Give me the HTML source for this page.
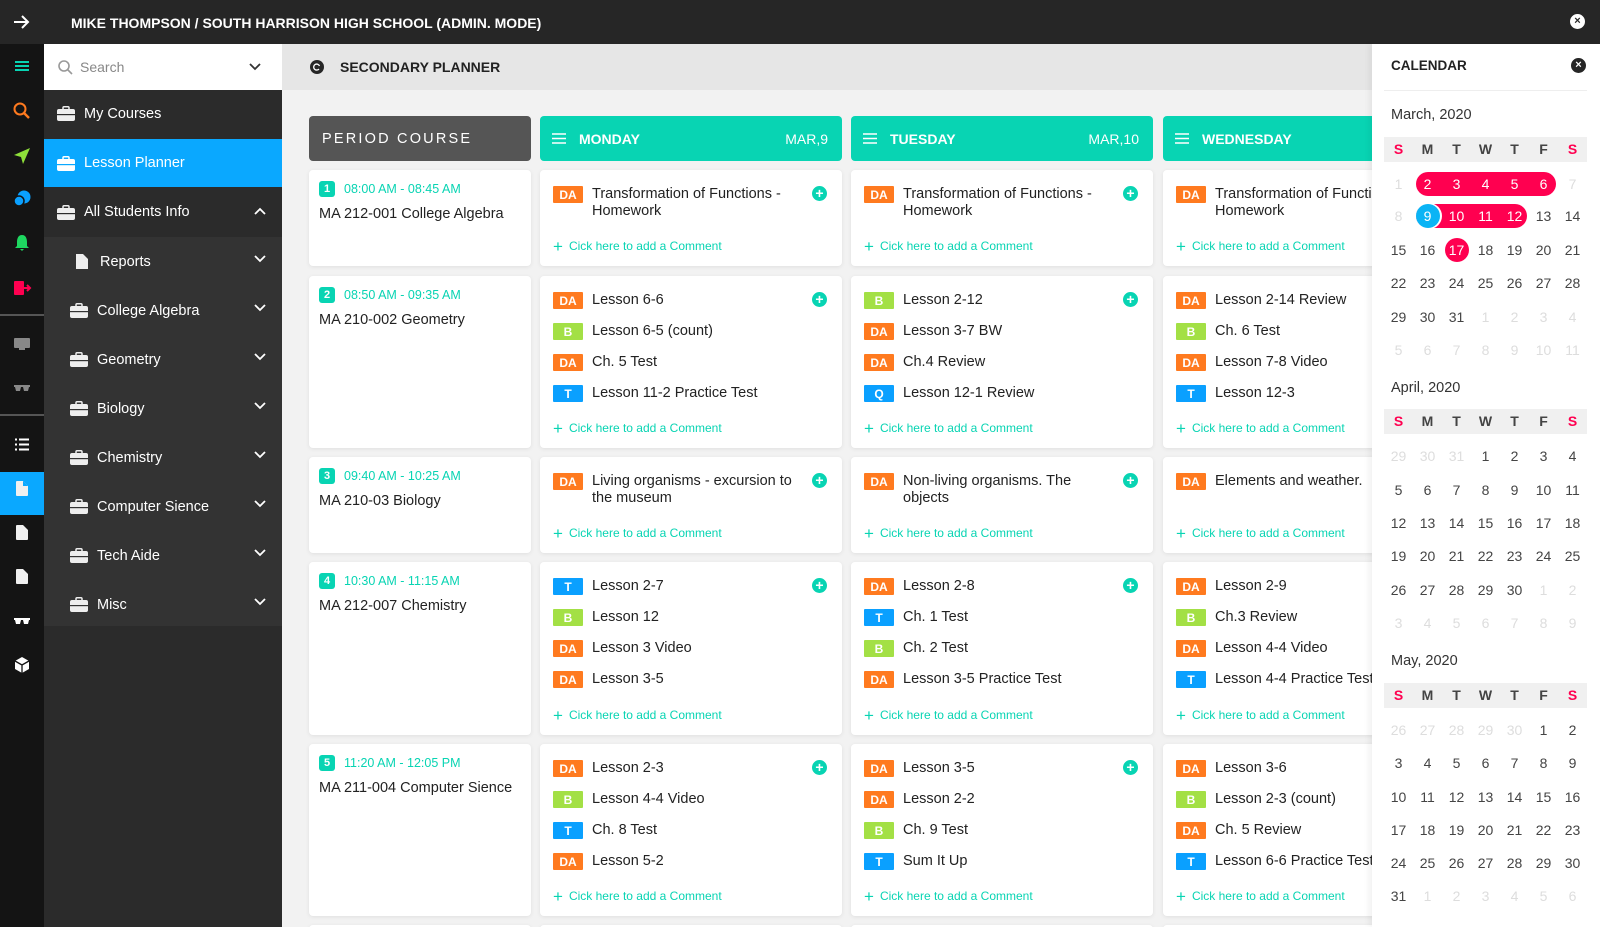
<!DOCTYPE html>
<html><head><meta charset="utf-8"><style>
*{box-sizing:border-box;margin:0;padding:0}
body{width:1600px;height:927px;overflow:hidden;background:#f2f2f2;font-family:"Liberation Sans",sans-serif;color:#222;position:relative}
.abs{position:absolute}
#top{left:0;top:0;width:1600px;height:44px;background:#262626;color:#fff}
#strip{left:0;top:44px;width:44px;height:883px;background:#141414}
#nav{left:44px;top:44px;width:238px;height:883px;background:#2b2b2b}
.ni{position:absolute;left:0;width:238px;height:49px;color:#fff;font-size:14.5px;display:flex;align-items:center}
.ni svg.bc{margin-right:9px}
.chev{position:absolute;right:16px;top:18px}
#main{left:282px;top:44px;width:1090px;height:883px;overflow:hidden}
.card{position:absolute;background:#fff;border-radius:4px;box-shadow:0 1px 4px rgba(0,0,0,.08)}
.hd{position:absolute;top:72px;height:45px;border-radius:4px;color:#fff;font-weight:bold;font-size:14px;display:flex;align-items:center}
.it{display:flex;align-items:flex-start;min-height:31px}
.b{width:30px;height:17px;color:#fff;font-size:12px;font-weight:bold;display:flex;align-items:center;justify-content:center;border-radius:1px;margin:5px 9px 0 0;flex:none}
.DA{background:#ff7a1f}.B{background:#a3e045}.T,.Q{background:#0aa0ff}
.tx{font-size:14.5px;line-height:16.5px;margin-top:5px;width:200px}
.items{position:absolute;left:13px;top:11px}
.pl{position:absolute;right:15px;top:16px;width:15px;height:15px;border-radius:50%;background:#08d4b3;color:#fff;font-size:14px;line-height:15px;text-align:center;font-weight:bold}
.cm{position:absolute;left:13px;bottom:11px;color:#08d4b3;font-size:12px;line-height:16px}
.cm span{font-size:17px;vertical-align:-2px;margin-right:6px}
.pc .num{position:absolute;left:10px;top:11px;width:16px;height:16px;border-radius:3px;background:#08d4b3;color:#fff;font-size:11px;font-weight:bold;text-align:center;line-height:16px}
.pc .tm{position:absolute;left:35px;top:12px;color:#08d4b3;font-size:12.5px}
.pc .cn{position:absolute;left:10px;top:36px;font-size:14.5px}
#cal{left:1372px;top:44px;width:228px;height:883px;background:#fff;box-shadow:-3px 0 6px rgba(0,0,0,.06)}
.ch{position:absolute;left:12px;width:203px;height:25px;background:#f0f0f0}
.d{position:absolute;width:29px;text-align:center;font-size:14px;color:#444;transform:translateY(-50%)}
.g{color:#ddd}
.w{font-weight:bold;color:#444;font-size:14px}
.s{color:#ff0050}
.mt{position:absolute;left:19px;font-size:14.5px;color:#333}
</style></head><body>
<div id="top" class="abs">
 <svg class="abs" style="left:13px;top:14px" width="17" height="16" viewBox="0 0 17 16"><path d="M1 8H15M9 2L15 8L9 14" stroke="#fff" stroke-width="2" fill="none"/></svg>
 <div class="abs" style="left:71px;top:15px;font-size:14px;font-weight:bold">MIKE THOMPSON / SOUTH HARRISON HIGH SCHOOL (ADMIN. MODE)</div>
 <div class="abs" style="left:1570px;top:14px;width:15px;height:15px;border-radius:50%;background:#fff;color:#262626;font-size:11px;line-height:15px;text-align:center;font-weight:bold">×</div>
</div>
<div id="strip" class="abs">
 <svg class="abs" style="left:14px;top:16px" width="16" height="12"><path d="M1 2H15M1 6H15M1 10H15" stroke="#08d4b3" stroke-width="2"/></svg>
 <svg class="abs" style="left:13px;top:58px" width="18" height="18"><circle cx="7" cy="7" r="5.5" stroke="#ff7a1f" stroke-width="2" fill="none"/><path d="M11 11L16 16" stroke="#ff7a1f" stroke-width="2.4"/></svg>
 <svg class="abs" style="left:13px;top:103px" width="18" height="18"><path d="M17 1L1 8L8 10L10 17Z" fill="#8ee03a"/></svg>
 <svg class="abs" style="left:13px;top:146px" width="19" height="18"><circle cx="11" cy="7" r="6.5" fill="#0aa0ff"/><circle cx="6" cy="11" r="5" fill="#0aa0ff" stroke="#141414" stroke-width="1.5"/></svg>
 <svg class="abs" style="left:14px;top:190px" width="16" height="18"><path d="M8 1C4 1 3 5 3 8V12L1 14H15L13 12V8C13 5 12 1 8 1Z M6 15H10L8 17Z" fill="#1ed760"/></svg>
 <svg class="abs" style="left:13px;top:236px" width="19" height="16"><rect x="1" y="1" width="10" height="14" rx="1" fill="#ff0050"/><path d="M8 8H17M14 5L17 8L14 11" stroke="#ff0050" stroke-width="2" fill="none"/></svg>
 <div class="abs" style="left:0;top:270px;width:44px;height:2px;background:#555"></div>
 <svg class="abs" style="left:13px;top:293px" width="18" height="14"><rect x="1" y="1" width="16" height="10" rx="1" fill="#888"/><rect x="6" y="11" width="6" height="2" fill="#888"/></svg>
 <svg class="abs" style="left:13px;top:340px" width="18" height="8"><path d="M1 1H17V3H16L15 7H11L10 3H8L7 7H3L2 3H1Z" fill="#888"/></svg>
 <div class="abs" style="left:0;top:370px;width:44px;height:2px;background:#555"></div>
 <svg class="abs" style="left:14px;top:394px" width="16" height="13"><path d="M1 1.5H3M1 6.5H3M1 11.5H3M5 1.5H15M5 6.5H15M5 11.5H15" stroke="#fff" stroke-width="2"/></svg>
 <div class="abs" style="left:0;top:428px;width:44px;height:43px;background:#0aa8ff"></div>
 <svg class="abs" style="left:16px;top:437px" width="12" height="15"><path d="M0 1Q0 0 1 0H7L12 5V14Q12 15 11 15H1Q0 15 0 14Z" fill="#f0f0f0"/><path d="M7 0V5H12" fill="#0aa8ff"/></svg>
 <svg class="abs" style="left:16px;top:481px" width="12" height="15"><path d="M0 1Q0 0 1 0H7L12 5V14Q12 15 11 15H1Q0 15 0 14Z" fill="#f0f0f0"/></svg>
 <svg class="abs" style="left:16px;top:525px" width="12" height="15"><path d="M0 1Q0 0 1 0H7L12 5V14Q12 15 11 15H1Q0 15 0 14Z" fill="#f0f0f0"/></svg>
 <svg class="abs" style="left:13px;top:573px" width="18" height="8"><path d="M1 1H17V3H16L15 7H11L10 3H8L7 7H3L2 3H1Z" fill="#fff"/></svg>
 <svg class="abs" style="left:14px;top:612px" width="16" height="18"><path d="M8 1L15 5V13L8 17L1 13V5Z" fill="#fff"/><path d="M1 5L8 9L15 5M8 9V17" stroke="#141414" stroke-width="1.3" fill="none"/></svg>
</div>
<div id="nav" class="abs">
 <div class="abs" style="left:0;top:0;width:238px;height:46px;background:#fff">
  <svg class="abs" style="left:14px;top:16px" width="15" height="15"><circle cx="6" cy="6" r="5" stroke="#999" stroke-width="1.6" fill="none"/><path d="M10 10L14 14" stroke="#999" stroke-width="1.6"/></svg>
  <div class="abs" style="left:36px;top:15px;font-size:14px;color:#888">Search</div>
  <svg class="abs" style="left:205px;top:19px" width="12" height="8"><path d="M1 1L6 6L11 1" stroke="#333" stroke-width="1.8" fill="none"/></svg>
 </div>
 <div class="abs" style="left:0;top:193px;width:238px;height:389px;background:#333"></div>
 <div class="abs" style="left:0;top:582px;width:238px;height:301px;background:#2b2b2b"></div>
 <div class="ni" style="top:45px;padding-left:13px"><svg class="bc" width="18" height="15"><rect x="6" y="0.8" width="6" height="3" rx="1" stroke="#eee" stroke-width="1.5" fill="none"/><rect x="0" y="3" width="18" height="12" rx="2" fill="#eee"/><rect x="0" y="8" width="18" height="1.2" fill="#2b2b2b"/></svg>My Courses</div>
 <div class="ni" style="top:95px;height:48px;padding-left:13px;background:#0aa8ff"><svg class="bc" width="18" height="15"><rect x="6" y="0.8" width="6" height="3" rx="1" stroke="#fff" stroke-width="1.5" fill="none"/><rect x="0" y="3" width="18" height="12" rx="2" fill="#fff"/><rect x="0" y="8" width="18" height="1.2" fill="#0aa8ff"/></svg>Lesson Planner</div>
 <div class="ni" style="top:143px;height:50px;padding-left:13px"><svg class="bc" width="18" height="15"><rect x="6" y="0.8" width="6" height="3" rx="1" stroke="#eee" stroke-width="1.5" fill="none"/><rect x="0" y="3" width="18" height="12" rx="2" fill="#eee"/><rect x="0" y="8" width="18" height="1.2" fill="#2b2b2b"/></svg>All Students Info<svg class="chev" width="12" height="8" style="top:20px"><path d="M1 7L6 2L11 7" stroke="#fff" stroke-width="1.8" fill="none"/></svg></div>
 <div class="ni" style="top:193px;padding-left:29px"><svg class="bc" width="18" height="15"><path d="M3 0H10L15 5V15H3Z" fill="#eee"/></svg>Reports<svg class="chev" width="12" height="8"><path d="M1 1L6 6L11 1" stroke="#fff" stroke-width="1.8" fill="none"/></svg></div>
 <div class="ni" style="top:242px;padding-left:26px"><svg class="bc" width="18" height="15"><rect x="6" y="0.8" width="6" height="3" rx="1" stroke="#eee" stroke-width="1.5" fill="none"/><rect x="0" y="3" width="18" height="12" rx="2" fill="#eee"/><rect x="0" y="8" width="18" height="1.2" fill="#333"/></svg>College Algebra<svg class="chev" width="12" height="8"><path d="M1 1L6 6L11 1" stroke="#fff" stroke-width="1.8" fill="none"/></svg></div>
 <div class="ni" style="top:291px;padding-left:26px"><svg class="bc" width="18" height="15"><rect x="6" y="0.8" width="6" height="3" rx="1" stroke="#eee" stroke-width="1.5" fill="none"/><rect x="0" y="3" width="18" height="12" rx="2" fill="#eee"/><rect x="0" y="8" width="18" height="1.2" fill="#333"/></svg>Geometry<svg class="chev" width="12" height="8"><path d="M1 1L6 6L11 1" stroke="#fff" stroke-width="1.8" fill="none"/></svg></div>
 <div class="ni" style="top:340px;padding-left:26px"><svg class="bc" width="18" height="15"><rect x="6" y="0.8" width="6" height="3" rx="1" stroke="#eee" stroke-width="1.5" fill="none"/><rect x="0" y="3" width="18" height="12" rx="2" fill="#eee"/><rect x="0" y="8" width="18" height="1.2" fill="#333"/></svg>Biology<svg class="chev" width="12" height="8"><path d="M1 1L6 6L11 1" stroke="#fff" stroke-width="1.8" fill="none"/></svg></div>
 <div class="ni" style="top:389px;padding-left:26px"><svg class="bc" width="18" height="15"><rect x="6" y="0.8" width="6" height="3" rx="1" stroke="#eee" stroke-width="1.5" fill="none"/><rect x="0" y="3" width="18" height="12" rx="2" fill="#eee"/><rect x="0" y="8" width="18" height="1.2" fill="#333"/></svg>Chemistry<svg class="chev" width="12" height="8"><path d="M1 1L6 6L11 1" stroke="#fff" stroke-width="1.8" fill="none"/></svg></div>
 <div class="ni" style="top:438px;padding-left:26px"><svg class="bc" width="18" height="15"><rect x="6" y="0.8" width="6" height="3" rx="1" stroke="#eee" stroke-width="1.5" fill="none"/><rect x="0" y="3" width="18" height="12" rx="2" fill="#eee"/><rect x="0" y="8" width="18" height="1.2" fill="#333"/></svg>Computer Sience<svg class="chev" width="12" height="8"><path d="M1 1L6 6L11 1" stroke="#fff" stroke-width="1.8" fill="none"/></svg></div>
 <div class="ni" style="top:487px;padding-left:26px"><svg class="bc" width="18" height="15"><rect x="6" y="0.8" width="6" height="3" rx="1" stroke="#eee" stroke-width="1.5" fill="none"/><rect x="0" y="3" width="18" height="12" rx="2" fill="#eee"/><rect x="0" y="8" width="18" height="1.2" fill="#333"/></svg>Tech Aide<svg class="chev" width="12" height="8"><path d="M1 1L6 6L11 1" stroke="#fff" stroke-width="1.8" fill="none"/></svg></div>
 <div class="ni" style="top:536px;padding-left:26px"><svg class="bc" width="18" height="15"><rect x="6" y="0.8" width="6" height="3" rx="1" stroke="#eee" stroke-width="1.5" fill="none"/><rect x="0" y="3" width="18" height="12" rx="2" fill="#eee"/><rect x="0" y="8" width="18" height="1.2" fill="#333"/></svg>Misc<svg class="chev" width="12" height="8"><path d="M1 1L6 6L11 1" stroke="#fff" stroke-width="1.8" fill="none"/></svg></div>
</div>

<div id="main" class="abs">
 <div class="abs" style="left:0;top:0;width:1090px;height:46px;background:#e6e6e6">
  <div class="abs" style="left:28px;top:16px;width:14px;height:14px;border-radius:50%;background:#262626"></div>
  <svg class="abs" style="left:31px;top:19px" width="8" height="8"><path d="M6.5 3A3 3 0 1 0 6 6" stroke="#fff" stroke-width="1.3" fill="none"/></svg>
  <div class="abs" style="left:58px;top:15px;font-size:14px;font-weight:bold;color:#222">SECONDARY PLANNER</div>
 </div>
 <div class="hd" style="left:27px;width:222px;background:#555;font-weight:normal;letter-spacing:2.2px;padding-left:13px;font-size:14.5px">PERIOD COURSE</div>
 <div class="hd" style="left:258px;width:302px;background:#08d4b3;padding-left:12px"><svg width="14" height="11" style="margin-right:13px"><path d="M0 1H14M0 5.5H14M0 10H14" stroke="#fff" stroke-width="1.6"/></svg>MONDAY<span style="position:absolute;right:14px;font-weight:normal">MAR,9</span></div>
 <div class="hd" style="left:569px;width:302px;background:#08d4b3;padding-left:12px"><svg width="14" height="11" style="margin-right:13px"><path d="M0 1H14M0 5.5H14M0 10H14" stroke="#fff" stroke-width="1.6"/></svg>TUESDAY<span style="position:absolute;right:14px;font-weight:normal">MAR,10</span></div>
 <div class="hd" style="left:881px;width:302px;background:#08d4b3;padding-left:12px"><svg width="14" height="11" style="margin-right:13px"><path d="M0 1H14M0 5.5H14M0 10H14" stroke="#fff" stroke-width="1.6"/></svg>WEDNESDAY</div>

 <div class="card pc" style="left:27px;top:126px;width:222px;height:96px"><div class="num">1</div><div class="tm">08:00 AM - 08:45 AM</div><div class="cn">MA 212-001 College Algebra</div></div>
 <div class="card pc" style="left:27px;top:232px;width:222px;height:172px"><div class="num">2</div><div class="tm">08:50 AM - 09:35 AM</div><div class="cn">MA 210-002 Geometry</div></div>
 <div class="card pc" style="left:27px;top:413px;width:222px;height:96px"><div class="num">3</div><div class="tm">09:40 AM - 10:25 AM</div><div class="cn">MA 210-03 Biology</div></div>
 <div class="card pc" style="left:27px;top:518px;width:222px;height:173px"><div class="num">4</div><div class="tm">10:30 AM - 11:15 AM</div><div class="cn">MA 212-007 Chemistry</div></div>
 <div class="card pc" style="left:27px;top:700px;width:222px;height:172px"><div class="num">5</div><div class="tm">11:20 AM - 12:05 PM</div><div class="cn">MA 211-004 Computer Sience</div></div>

 <div class="card" style="left:258px;top:126px;width:302px;height:96px"><div class="items"><div class="it"><div class="b DA">DA</div><div class="tx">Transformation of Functions - Homework</div></div></div><div class="pl">+</div><div class="cm"><span>+</span>Cick here to add a Comment</div></div>
 <div class="card" style="left:258px;top:232px;width:302px;height:172px"><div class="items"><div class="it"><div class="b DA">DA</div><div class="tx">Lesson 6-6</div></div><div class="it"><div class="b B">B</div><div class="tx">Lesson 6-5 (count)</div></div><div class="it"><div class="b DA">DA</div><div class="tx">Ch. 5 Test</div></div><div class="it"><div class="b T">T</div><div class="tx">Lesson 11-2 Practice Test</div></div></div><div class="pl">+</div><div class="cm"><span>+</span>Cick here to add a Comment</div></div>
 <div class="card" style="left:258px;top:413px;width:302px;height:96px"><div class="items"><div class="it"><div class="b DA">DA</div><div class="tx">Living organisms - excursion to the museum</div></div></div><div class="pl">+</div><div class="cm"><span>+</span>Cick here to add a Comment</div></div>
 <div class="card" style="left:258px;top:518px;width:302px;height:173px"><div class="items"><div class="it"><div class="b T">T</div><div class="tx">Lesson 2-7</div></div><div class="it"><div class="b B">B</div><div class="tx">Lesson 12</div></div><div class="it"><div class="b DA">DA</div><div class="tx">Lesson 3 Video</div></div><div class="it"><div class="b DA">DA</div><div class="tx">Lesson 3-5</div></div></div><div class="pl">+</div><div class="cm"><span>+</span>Cick here to add a Comment</div></div>
 <div class="card" style="left:258px;top:700px;width:302px;height:172px"><div class="items"><div class="it"><div class="b DA">DA</div><div class="tx">Lesson 2-3</div></div><div class="it"><div class="b B">B</div><div class="tx">Lesson 4-4 Video</div></div><div class="it"><div class="b T">T</div><div class="tx">Ch. 8 Test</div></div><div class="it"><div class="b DA">DA</div><div class="tx">Lesson 5-2</div></div></div><div class="pl">+</div><div class="cm"><span>+</span>Cick here to add a Comment</div></div>

 <div class="card" style="left:569px;top:126px;width:302px;height:96px"><div class="items"><div class="it"><div class="b DA">DA</div><div class="tx">Transformation of Functions - Homework</div></div></div><div class="pl">+</div><div class="cm"><span>+</span>Cick here to add a Comment</div></div>
 <div class="card" style="left:569px;top:232px;width:302px;height:172px"><div class="items"><div class="it"><div class="b B">B</div><div class="tx">Lesson 2-12</div></div><div class="it"><div class="b DA">DA</div><div class="tx">Lesson 3-7 BW</div></div><div class="it"><div class="b DA">DA</div><div class="tx">Ch.4 Review</div></div><div class="it"><div class="b Q">Q</div><div class="tx">Lesson 12-1 Review</div></div></div><div class="pl">+</div><div class="cm"><span>+</span>Cick here to add a Comment</div></div>
 <div class="card" style="left:569px;top:413px;width:302px;height:96px"><div class="items"><div class="it"><div class="b DA">DA</div><div class="tx">Non-living organisms. The objects</div></div></div><div class="pl">+</div><div class="cm"><span>+</span>Cick here to add a Comment</div></div>
 <div class="card" style="left:569px;top:518px;width:302px;height:173px"><div class="items"><div class="it"><div class="b DA">DA</div><div class="tx">Lesson 2-8</div></div><div class="it"><div class="b T">T</div><div class="tx">Ch. 1 Test</div></div><div class="it"><div class="b B">B</div><div class="tx">Ch. 2 Test</div></div><div class="it"><div class="b DA">DA</div><div class="tx">Lesson 3-5 Practice Test</div></div></div><div class="pl">+</div><div class="cm"><span>+</span>Cick here to add a Comment</div></div>
 <div class="card" style="left:569px;top:700px;width:302px;height:172px"><div class="items"><div class="it"><div class="b DA">DA</div><div class="tx">Lesson 3-5</div></div><div class="it"><div class="b DA">DA</div><div class="tx">Lesson 2-2</div></div><div class="it"><div class="b B">B</div><div class="tx">Ch. 9 Test</div></div><div class="it"><div class="b T">T</div><div class="tx">Sum It Up</div></div></div><div class="pl">+</div><div class="cm"><span>+</span>Cick here to add a Comment</div></div>

 <div class="card" style="left:881px;top:126px;width:302px;height:96px"><div class="items"><div class="it"><div class="b DA">DA</div><div class="tx">Transformation of Functions - Homework</div></div></div><div class="pl">+</div><div class="cm"><span>+</span>Cick here to add a Comment</div></div>
 <div class="card" style="left:881px;top:232px;width:302px;height:172px"><div class="items"><div class="it"><div class="b DA">DA</div><div class="tx">Lesson 2-14 Review</div></div><div class="it"><div class="b B">B</div><div class="tx">Ch. 6 Test</div></div><div class="it"><div class="b DA">DA</div><div class="tx">Lesson 7-8 Video</div></div><div class="it"><div class="b T">T</div><div class="tx">Lesson 12-3</div></div></div><div class="pl">+</div><div class="cm"><span>+</span>Cick here to add a Comment</div></div>
 <div class="card" style="left:881px;top:413px;width:302px;height:96px"><div class="items"><div class="it"><div class="b DA">DA</div><div class="tx">Elements and weather.</div></div></div><div class="pl">+</div><div class="cm"><span>+</span>Cick here to add a Comment</div></div>
 <div class="card" style="left:881px;top:518px;width:302px;height:173px"><div class="items"><div class="it"><div class="b DA">DA</div><div class="tx">Lesson 2-9</div></div><div class="it"><div class="b B">B</div><div class="tx">Ch.3 Review</div></div><div class="it"><div class="b DA">DA</div><div class="tx">Lesson 4-4 Video</div></div><div class="it"><div class="b T">T</div><div class="tx">Lesson 4-4 Practice Test</div></div></div><div class="pl">+</div><div class="cm"><span>+</span>Cick here to add a Comment</div></div>
 <div class="card" style="left:881px;top:700px;width:302px;height:172px"><div class="items"><div class="it"><div class="b DA">DA</div><div class="tx">Lesson 3-6</div></div><div class="it"><div class="b B">B</div><div class="tx">Lesson 2-3 (count)</div></div><div class="it"><div class="b DA">DA</div><div class="tx">Ch. 5 Review</div></div><div class="it"><div class="b T">T</div><div class="tx">Lesson 6-6 Practice Test</div></div></div><div class="pl">+</div><div class="cm"><span>+</span>Cick here to add a Comment</div></div>
 <div class="card" style="left:27px;top:881px;width:222px;height:20px"></div>
 <div class="card" style="left:258px;top:881px;width:302px;height:20px"></div>
 <div class="card" style="left:569px;top:881px;width:302px;height:20px"></div>
 <div class="card" style="left:881px;top:881px;width:302px;height:20px"></div>
</div>

<div id="cal" class="abs">
 <div class="abs" style="left:19px;top:14px;font-size:13.5px;font-weight:bold;color:#222">CALENDAR</div>
 <div class="abs" style="left:199px;top:14px;width:15px;height:15px;border-radius:50%;background:#262626;color:#fff;font-size:11px;line-height:15px;text-align:center;font-weight:bold">×</div>
 <div class="abs" style="left:12px;top:46px;width:203px;height:1px;background:#eee"></div>

 <div class="mt" style="top:63px">March, 2020</div>
 <div class="ch" style="top:93px"></div>
 <div class="abs" style="left:44px;top:128px;width:140px;height:24px;border-radius:12px;background:#ff0050"></div>
 <div class="abs" style="left:44px;top:160px;width:111px;height:24px;border-radius:12px;background:#ff0050"></div>
 <div class="abs" style="left:44px;top:160px;width:24px;height:24px;border-radius:12px;background:#0ab4f5;box-shadow:1px 0 0 1px #fff"></div>
 <div class="abs" style="left:73px;top:194px;width:24px;height:24px;border-radius:12px;background:#ff0050"></div>

 <div class="mt" style="top:336px">April, 2020</div>
 <div class="ch" style="top:365px"></div>
 <div class="mt" style="top:609px">May, 2020</div>
 <div class="ch" style="top:639px"></div>

 <div style="position:absolute;left:0;top:0">
 <div class="d w s" style="left:12px;top:105px">S</div><div class="d w" style="left:41px;top:105px">M</div><div class="d w" style="left:70px;top:105px">T</div><div class="d w" style="left:99px;top:105px">W</div><div class="d w" style="left:128px;top:105px">T</div><div class="d w" style="left:157px;top:105px">F</div><div class="d w s" style="left:186px;top:105px">S</div>
 <div class="d g" style="left:12px;top:140px">1</div><div class="d" style="left:41px;top:140px;color:#fff">2</div><div class="d" style="left:70px;top:140px;color:#fff">3</div><div class="d" style="left:99px;top:140px;color:#fff">4</div><div class="d" style="left:128px;top:140px;color:#fff">5</div><div class="d" style="left:157px;top:140px;color:#fff">6</div><div class="d g" style="left:186px;top:140px">7</div>
 <div class="d g" style="left:12px;top:172px">8</div><div class="d" style="left:41px;top:172px;color:#fff">9</div><div class="d" style="left:70px;top:172px;color:#fff">10</div><div class="d" style="left:99px;top:172px;color:#fff">11</div><div class="d" style="left:128px;top:172px;color:#fff">12</div><div class="d" style="left:157px;top:172px">13</div><div class="d" style="left:186px;top:172px">14</div>
 <div class="d" style="left:12px;top:206px">15</div><div class="d" style="left:41px;top:206px">16</div><div class="d" style="left:70px;top:206px;color:#fff">17</div><div class="d" style="left:99px;top:206px">18</div><div class="d" style="left:128px;top:206px">19</div><div class="d" style="left:157px;top:206px">20</div><div class="d" style="left:186px;top:206px">21</div>
 <div class="d" style="left:12px;top:239px">22</div><div class="d" style="left:41px;top:239px">23</div><div class="d" style="left:70px;top:239px">24</div><div class="d" style="left:99px;top:239px">25</div><div class="d" style="left:128px;top:239px">26</div><div class="d" style="left:157px;top:239px">27</div><div class="d" style="left:186px;top:239px">28</div>
 <div class="d" style="left:12px;top:273px">29</div><div class="d" style="left:41px;top:273px">30</div><div class="d" style="left:70px;top:273px">31</div><div class="d g" style="left:99px;top:273px">1</div><div class="d g" style="left:128px;top:273px">2</div><div class="d g" style="left:157px;top:273px">3</div><div class="d g" style="left:186px;top:273px">4</div>
 <div class="d g" style="left:12px;top:306px">5</div><div class="d g" style="left:41px;top:306px">6</div><div class="d g" style="left:70px;top:306px">7</div><div class="d g" style="left:99px;top:306px">8</div><div class="d g" style="left:128px;top:306px">9</div><div class="d g" style="left:157px;top:306px">10</div><div class="d g" style="left:186px;top:306px">11</div>
 </div>
 <div style="position:absolute;left:0;top:0">
 <div class="d w s" style="left:12px;top:377px">S</div><div class="d w" style="left:41px;top:377px">M</div><div class="d w" style="left:70px;top:377px">T</div><div class="d w" style="left:99px;top:377px">W</div><div class="d w" style="left:128px;top:377px">T</div><div class="d w" style="left:157px;top:377px">F</div><div class="d w s" style="left:186px;top:377px">S</div>
 <div class="d g" style="left:12px;top:412px">29</div><div class="d g" style="left:41px;top:412px">30</div><div class="d g" style="left:70px;top:412px">31</div><div class="d" style="left:99px;top:412px">1</div><div class="d" style="left:128px;top:412px">2</div><div class="d" style="left:157px;top:412px">3</div><div class="d" style="left:186px;top:412px">4</div>
 <div class="d" style="left:12px;top:446px">5</div><div class="d" style="left:41px;top:446px">6</div><div class="d" style="left:70px;top:446px">7</div><div class="d" style="left:99px;top:446px">8</div><div class="d" style="left:128px;top:446px">9</div><div class="d" style="left:157px;top:446px">10</div><div class="d" style="left:186px;top:446px">11</div>
 <div class="d" style="left:12px;top:479px">12</div><div class="d" style="left:41px;top:479px">13</div><div class="d" style="left:70px;top:479px">14</div><div class="d" style="left:99px;top:479px">15</div><div class="d" style="left:128px;top:479px">16</div><div class="d" style="left:157px;top:479px">17</div><div class="d" style="left:186px;top:479px">18</div>
 <div class="d" style="left:12px;top:512px">19</div><div class="d" style="left:41px;top:512px">20</div><div class="d" style="left:70px;top:512px">21</div><div class="d" style="left:99px;top:512px">22</div><div class="d" style="left:128px;top:512px">23</div><div class="d" style="left:157px;top:512px">24</div><div class="d" style="left:186px;top:512px">25</div>
 <div class="d" style="left:12px;top:546px">26</div><div class="d" style="left:41px;top:546px">27</div><div class="d" style="left:70px;top:546px">28</div><div class="d" style="left:99px;top:546px">29</div><div class="d" style="left:128px;top:546px">30</div><div class="d g" style="left:157px;top:546px">1</div><div class="d g" style="left:186px;top:546px">2</div>
 <div class="d g" style="left:12px;top:579px">3</div><div class="d g" style="left:41px;top:579px">4</div><div class="d g" style="left:70px;top:579px">5</div><div class="d g" style="left:99px;top:579px">6</div><div class="d g" style="left:128px;top:579px">7</div><div class="d g" style="left:157px;top:579px">8</div><div class="d g" style="left:186px;top:579px">9</div>
 </div>
 <div style="position:absolute;left:0;top:0">
 <div class="d w s" style="left:12px;top:651px">S</div><div class="d w" style="left:41px;top:651px">M</div><div class="d w" style="left:70px;top:651px">T</div><div class="d w" style="left:99px;top:651px">W</div><div class="d w" style="left:128px;top:651px">T</div><div class="d w" style="left:157px;top:651px">F</div><div class="d w s" style="left:186px;top:651px">S</div>
 <div class="d g" style="left:12px;top:686px">26</div><div class="d g" style="left:41px;top:686px">27</div><div class="d g" style="left:70px;top:686px">28</div><div class="d g" style="left:99px;top:686px">29</div><div class="d g" style="left:128px;top:686px">30</div><div class="d" style="left:157px;top:686px">1</div><div class="d" style="left:186px;top:686px">2</div>
 <div class="d" style="left:12px;top:719px">3</div><div class="d" style="left:41px;top:719px">4</div><div class="d" style="left:70px;top:719px">5</div><div class="d" style="left:99px;top:719px">6</div><div class="d" style="left:128px;top:719px">7</div><div class="d" style="left:157px;top:719px">8</div><div class="d" style="left:186px;top:719px">9</div>
 <div class="d" style="left:12px;top:753px">10</div><div class="d" style="left:41px;top:753px">11</div><div class="d" style="left:70px;top:753px">12</div><div class="d" style="left:99px;top:753px">13</div><div class="d" style="left:128px;top:753px">14</div><div class="d" style="left:157px;top:753px">15</div><div class="d" style="left:186px;top:753px">16</div>
 <div class="d" style="left:12px;top:786px">17</div><div class="d" style="left:41px;top:786px">18</div><div class="d" style="left:70px;top:786px">19</div><div class="d" style="left:99px;top:786px">20</div><div class="d" style="left:128px;top:786px">21</div><div class="d" style="left:157px;top:786px">22</div><div class="d" style="left:186px;top:786px">23</div>
 <div class="d" style="left:12px;top:819px">24</div><div class="d" style="left:41px;top:819px">25</div><div class="d" style="left:70px;top:819px">26</div><div class="d" style="left:99px;top:819px">27</div><div class="d" style="left:128px;top:819px">28</div><div class="d" style="left:157px;top:819px">29</div><div class="d" style="left:186px;top:819px">30</div>
 <div class="d" style="left:12px;top:852px">31</div><div class="d g" style="left:41px;top:852px">1</div><div class="d g" style="left:70px;top:852px">2</div><div class="d g" style="left:99px;top:852px">3</div><div class="d g" style="left:128px;top:852px">4</div><div class="d g" style="left:157px;top:852px">5</div><div class="d g" style="left:186px;top:852px">6</div>
 </div>
</div>
</body></html>
